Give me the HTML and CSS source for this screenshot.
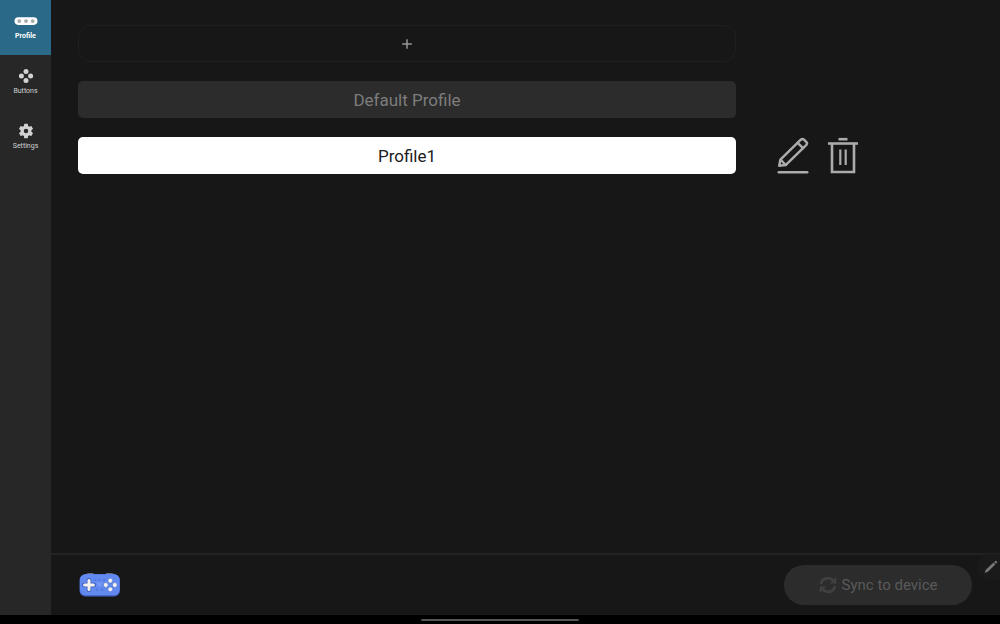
FILE: index.html
```html
<!DOCTYPE html>
<html lang="en">
<head>
  <meta charset="UTF-8">
  <meta name="viewport" content="width=device-width, initial-scale=1.0">
  <title>Profiles</title>
  <link rel="stylesheet" href="styles.css">
</head>
<body>
  <div class="app">
    <nav class="sidebar">
      <a href="#profile" class="nav-item active">
        <svg class="nav-icon" viewBox="0 0 24 16">
          <rect x="0.5" y="4.3" width="23" height="7.6" rx="3.8" fill="#fff"/>
          <g fill="#a9a9a9">
            <circle cx="5.3" cy="8.1" r="1.9"/>
            <circle cx="12" cy="8.1" r="1.9"/>
            <circle cx="18.7" cy="8.1" r="1.9"/>
          </g>
        </svg>
        <span>Profile</span>
      </a>
      <a href="#buttons" class="nav-item">
        <svg class="nav-icon" viewBox="0 0 24 16">
          <g fill="currentColor">
            <circle cx="12" cy="3.4" r="2.5"/>
            <circle cx="7.4" cy="8" r="2.5"/>
            <circle cx="16.6" cy="8" r="2.5"/>
            <circle cx="12" cy="12.6" r="2.5"/>
          </g>
        </svg>
        <span>Buttons</span>
      </a>
      <a href="#settings" class="nav-item">
        <svg class="nav-icon" viewBox="0 0 24 16">
          <g fill="currentColor" transform="translate(3 -1) scale(0.75)">
            <path d="M19.14 12.94c.04-.3.06-.61.06-.94 0-.32-.02-.64-.07-.94l2.03-1.58a.49.49 0 0 0 .12-.61l-1.92-3.32a.49.49 0 0 0-.59-.22l-2.39.96a7 7 0 0 0-1.62-.94l-.36-2.54a.48.48 0 0 0-.48-.41h-3.84a.48.48 0 0 0-.47.41l-.36 2.54c-.59.24-1.13.57-1.62.94l-2.39-.96a.48.48 0 0 0-.59.22L2.74 8.87a.48.48 0 0 0 .12.61l2.03 1.58c-.05.3-.09.63-.09.94s.02.64.07.94l-2.03 1.58a.49.49 0 0 0-.12.61l1.92 3.32c.12.22.37.29.59.22l2.39-.96c.5.38 1.03.7 1.62.94l.36 2.54c.05.24.24.41.48.41h3.84c.24 0 .44-.17.47-.41l.36-2.54a7 7 0 0 0 1.62-.94l2.39.96c.22.08.47 0 .59-.22l1.92-3.32a.48.48 0 0 0-.12-.61zM12 15a3 3 0 1 1 0-6 3 3 0 0 1 0 6z"/>
          </g>
        </svg>
        <span>Settings</span>
      </a>
    </nav>

    <div class="content">
      <main class="profiles">
        <div class="profile-row">
          <button class="profile-btn add" aria-label="Add profile">
            <svg class="plus" viewBox="0 0 10 10" stroke="currentColor" stroke-width="1.5">
              <path d="M5 0.2V9.8M0.2 5H9.8"/>
            </svg>
          </button>
        </div>
        <div class="profile-row">
          <button class="profile-btn">Default Profile</button>
        </div>
        <div class="profile-row">
          <button class="profile-btn selected">Profile1</button>
          <div class="actions">
            <button class="icon-btn" aria-label="Rename profile">
              <svg viewBox="0 0 32 38" fill="none" stroke="currentColor" stroke-width="2.5" stroke-linejoin="round" stroke-linecap="round">
                <path d="M2.2 28.7L3.4 22.7L23.8 2.7Q25.4 1.3 27 2.7L29.4 5.1Q30.6 6.4 29.4 7.8L8.6 28.1Z"/>
                <path d="M20.6 5.9L26.1 11.2M4 23L8.6 28"/>
                <path d="M1.8 35.2H30.2"/>
              </svg>
            </button>
            <button class="icon-btn" aria-label="Delete profile">
              <svg viewBox="0 0 32 38" fill="none" stroke="currentColor" stroke-width="2.6">
                <path d="M11.5 2.2H20.5"/>
                <path d="M1 6.5H31"/>
                <path d="M5 7V35H27V7"/>
                <path d="M13.3 12.5V28M18.7 12.5V28" stroke-width="2.2"/>
              </svg>
            </button>
          </div>
        </div>
      </main>

      <footer class="footer">
        <svg class="gamepad" viewBox="0 0 42 26">
          <path d="M5 4Q6 1.5 9 1.5H14.5V4ZM27 4V1.5H32.5Q36 1.5 37 4Z" fill="#bccbf5"/>
          <rect x="0.5" y="2.2" width="40.5" height="22.3" rx="6" fill="#4566cd"/>
          <rect x="1" y="2.2" width="39.5" height="20.8" rx="5.5" fill="#6289ef"/>
          <path d="M10 8.2V17.8M5.2 13H14.8" stroke="#3f5dbb" stroke-width="4.4" stroke-linecap="round"/>
          <path d="M10 8.6V17.4M5.6 13H14.4" stroke="#f4f2ee" stroke-width="3" stroke-linecap="round"/>
          <g fill="#5679dc">
            <circle cx="16" cy="8" r="1.1"/>
            <circle cx="20.5" cy="8" r="1.1"/>
            <circle cx="25" cy="8" r="1.1"/>
            <circle cx="18.2" cy="17.8" r="1.3"/>
            <circle cx="23.2" cy="17.8" r="1.3"/>
          </g>
          <path d="M17.5 11H23.5M18.5 13.2H22.5" stroke="#86a4f6" stroke-width="1.2"/>
          <g fill="#f4f2ee" stroke="#4767c5" stroke-width="0.5">
            <circle cx="31.3" cy="8.7" r="2.4"/>
            <circle cx="26.8" cy="13" r="2.4"/>
            <circle cx="35.8" cy="13" r="2.4"/>
            <circle cx="31.3" cy="17.3" r="2.4"/>
          </g>
        </svg>
        <button class="sync-btn">
          <svg class="sync-icon" viewBox="0 0 18 18" fill="none" stroke="currentColor" stroke-width="2.8">
            <path d="M2 8A7 7 0 0 1 14.2 4.6"/>
            <path d="M16 10A7 7 0 0 1 3.8 13.4"/>
            <path d="M17.3 0.8V7.4H10.7ZM0.7 17.2V10.6H7.3Z" fill="currentColor" stroke="none"/>
          </svg>
          <span>Sync to device</span>
        </button>
      </footer>
    </div>

    <button class="pen-tool" aria-label="Pen">
      <svg viewBox="0 0 14 14" fill="#777">
        <path d="M0.6 13L1.8 9.7L9.5 2.5L11.4 4.4L3.9 11.7ZM10.1 1.9L11.2 0.9Q11.8 0.4 12.4 1L13 1.6Q13.6 2.2 13 2.8L12 3.8Z"/>
      </svg>
    </button>
  </div>

  <div class="system-bar"><div class="handle"></div></div>
</body>
</html>
```

FILE: styles.css
```css
* {
  margin: 0;
  padding: 0;
  box-sizing: border-box;
}

body {
  display: flex;
  flex-direction: column;
  min-height: 100vh;
  background: #000;
  color: #d2d2d2;
  font-family: Roboto, "Liberation Sans", sans-serif;
}

button {
  border: none;
  background: none;
  font: inherit;
  color: inherit;
  cursor: pointer;
}

svg {
  display: block;
}

.app {
  position: relative;
  flex: 1;
  display: flex;
  background: #171717;
}

/* Sidebar */
.sidebar {
  width: 51px;
  background: #272727;
}

.nav-item {
  display: flex;
  flex-direction: column;
  align-items: center;
  gap: 3px;
  height: 55px;
  padding-top: 13px;
  color: #d2d2d2;
  font-size: 7px;
  line-height: 9px;
  text-decoration: none;
}

.nav-item.active {
  background: #2a6987;
  color: #fff;
  font-weight: 700;
}

.nav-icon {
  width: 24px;
  height: 16px;
}

/* Profile list */
.content {
  flex: 1;
  display: flex;
  flex-direction: column;
}

.profiles {
  flex: 1;
  display: flex;
  flex-direction: column;
  gap: 19px;
  padding: 25px 27px;
}

.profile-row {
  display: grid;
  grid-template-columns: 1fr 196px;
  align-items: center;
  column-gap: 41px;
}

.profile-btn {
  display: flex;
  align-items: center;
  justify-content: center;
  height: 37px;
  border-radius: 5px;
  background: #2c2c2c;
  color: #7d7d7d;
  font-size: 17px;
}

.profile-btn.add {
  border: 1px solid #1f1f1f;
  border-radius: 12px;
  background: none;
  color: #969696;
}

.profile-btn.selected {
  background: #fff;
  color: #202020;
}

.plus {
  width: 10px;
  height: 10px;
}

.actions {
  display: flex;
  gap: 18px;
  color: #ababab;
}

.icon-btn svg {
  width: 32px;
  height: 38px;
  margin: -1px 0;
}

/* Footer */
.footer {
  display: flex;
  align-items: center;
  justify-content: space-between;
  height: 62px;
  padding: 0 28px;
  border-top: 2px solid #222;
}

.gamepad {
  width: 42px;
  height: 26px;
}

.sync-btn {
  display: flex;
  align-items: center;
  justify-content: center;
  gap: 5px;
  width: 188px;
  height: 40px;
  border-radius: 20px;
  background: #2c2c2c;
  color: #5a5a5a;
  font-size: 15px;
}

.sync-icon {
  width: 18px;
  height: 18px;
  color: #404040;
}

/* floats over the page edge */
.pen-tool {
  position: absolute;
  right: 0;
  bottom: 35px;
  width: 23px;
  height: 26px;
  padding-left: 7px;
  border-radius: 13px 0 0 13px;
  background: #1a1a1a;
}

.pen-tool svg {
  width: 14px;
  height: 14px;
}

.system-bar {
  display: flex;
  align-items: center;
  justify-content: center;
  height: 9px;
  background: #000;
}

.handle {
  width: 158px;
  height: 2px;
  border-radius: 1px;
  background: #555;
}
```
